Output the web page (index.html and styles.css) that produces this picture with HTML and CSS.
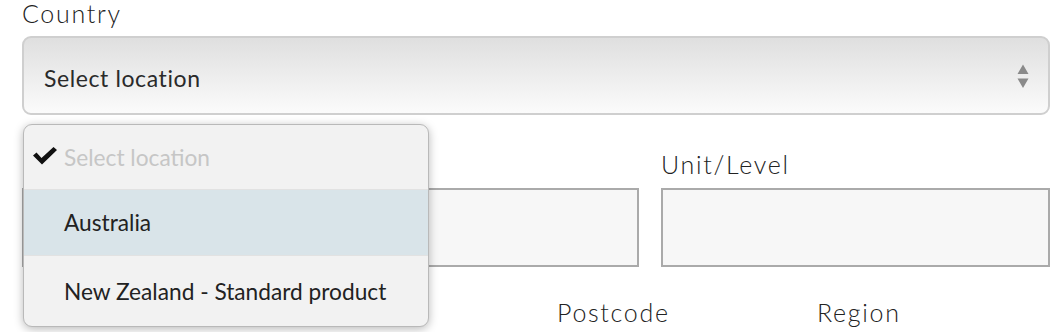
FILE: index.html
```html
<!DOCTYPE html>
<html>
<head>
<meta charset="utf-8">
<link rel="stylesheet" href="styles.css">
</head>
<body>
<form class="form">
  <div class="field">
    <label class="label">Country</label>
    <div class="select">
      <span class="select-text">Select location</span>
      <svg class="arrows" width="12" height="25" viewBox="0 0 12 25"><path d="M6 0.5 L11.5 10 L0.5 10 Z M0.5 14.5 L11.5 14.5 L6 24 Z" fill="#8a8a8a"/></svg>
    </div>
  </div>
  <div class="row row-two">
    <div class="field">
      <label class="label"></label>
      <div class="input"></div>
    </div>
    <div class="field">
      <label class="label">Unit/Level</label>
      <div class="input"></div>
    </div>
  </div>
  <div class="row row-three">
    <div class="field"><label class="label"></label></div>
    <div class="field"><label class="label">Postcode</label></div>
    <div class="field"><label class="label">Region</label></div>
  </div>
  <ul class="menu">
    <li class="option option-placeholder">
      <svg class="check" width="26" height="20" viewBox="0 0 26 20"><path d="M1 9.5 L4.5 6.5 L9.5 12 L21.5 1 L25 4 L10 18.5 Z" fill="#111"/></svg>
      <span>Select location</span>
    </li>
    <li class="option option-active">Australia</li>
    <li class="option">New Zealand - Standard product</li>
  </ul>
</form>
</body>
</html>
```
FILE: styles.css
```css
html, body {
  margin: 0;
  padding: 0;
  background: #ffffff;
}
body {
  font-family: Lato, "Open Sans", sans-serif;
  color: #333;
  min-height: 332px;
}
.form {
  position: relative;
  width: 1028px;
  padding: 0 10px 0 22px;
}
.field {
  display: flex;
  flex-direction: column;
}
.label {
  font-size: 25px;
  font-weight: 300;
  line-height: 26px;
  height: 26px;
  color: #222;
  margin-bottom: 10px;
  letter-spacing: 1.7px;
  white-space: nowrap;
}
.select {
  box-sizing: border-box;
  height: 79px;
  border: 2px solid #cfcfcf;
  border-radius: 9px;
  background: linear-gradient(#dfdfdf, #fbfbfb);
  display: flex;
  align-items: center;
  justify-content: space-between;
  padding: 0 19px 0 20px;
}
.select-text {
  font-size: 23px;
  letter-spacing: 0.6px;
  color: #2a2a2a;
  padding-top: 4px;
}
.arrows {
  display: block;
  margin-top: 1px;
}
.row {
  display: grid;
  column-gap: 22px;
}
.row-two {
  margin-top: 36px;
  grid-template-columns: 617px 389px;
}
.row-two .label {
  margin-bottom: 11px;
}
.input {
  box-sizing: border-box;
  height: 79px;
  border: 2px solid #aaaaaa;
  background: #f7f7f7;
}
.row-three {
  margin-top: 32px;
  grid-template-columns: 513px 238px 233px;
}
.menu {
  position: absolute;
  left: 23px;
  top: 124px;
  width: 406px;
  margin: 0;
  padding: 0;
  list-style: none;
  box-sizing: border-box;
  background: #f2f2f2;
  border: 1px solid #b9b9b9;
  border-radius: 9px;
  box-shadow: 0 2px 10px rgba(0, 0, 0, 0.28);
  overflow: hidden;
}
.option {
  box-sizing: border-box;
  height: 66px;
  display: flex;
  align-items: center;
  padding-left: 40px;
  font-size: 22.7px;
  color: #222;
  border-top: 1px solid #e2e2e2;
}
.option:first-child {
  border-top: none;
  height: 64px;
}
.option:last-child {
  height: 71px;
}
.option-placeholder {
  color: #c6c6c6;
  padding-left: 8px;
}
.check {
  display: block;
  margin-right: 6px;
  margin-top: -2px;
}
.option-active {
  background: #d9e4e9;
}
```
